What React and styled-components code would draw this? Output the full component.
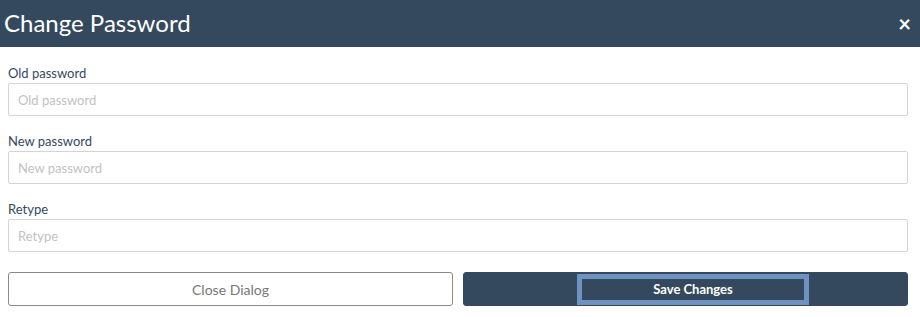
import React from "react";
import styled, { createGlobalStyle } from "styled-components";

const Global = createGlobalStyle`
  body {
    margin: 0;
    background: #fff;
    font-family: Lato, "Open Sans", sans-serif;
  }
`;

const App = () => {
  const fields = ["Old password", "New password", "Retype"];
  return (
    <>
      <Global />
      <Dialog>
        <Header>
          <Title>Change Password</Title>
          <CloseX>×</CloseX>
        </Header>
        <Body>
          {fields.map((f) => (
            <Field key={f}>
              <Label>{f}</Label>
              <Input type="password" placeholder={f} />
            </Field>
          ))}
          <Buttons>
            <Button>Close Dialog</Button>
            <Button primary>
              <Focus>Save Changes</Focus>
            </Button>
          </Buttons>
        </Body>
      </Dialog>
    </>
  );
};

const Dialog = styled.div`
  width: 920px;
`;
const Header = styled.div`
  height: 47px;
  background: #34495e;
  display: flex;
  align-items: center;
  justify-content: space-between;
  padding: 0 9px 0 4px;
  box-sizing: border-box;
`;
const Title = styled.div`
  color: #fff;
  font-size: 24px;
  line-height: 1;
  margin-top: -2px;
`;
const CloseX = styled.div`
  color: #fff;
  font-size: 22px;
  font-weight: bold;
  line-height: 1;
`;
const Body = styled.div`
  padding: 17px 12px 0 8px;
  display: flex;
  flex-direction: column;
`;
const Field = styled.div`
  display: flex;
  flex-direction: column;
  margin-bottom: 16px;
`;
const Label = styled.label`
  font-size: 13px;
  line-height: 19px;
  color: #34495e;
`;
const Input = styled.input`
  height: 33px;
  box-sizing: border-box;
  border: 1px solid #d4d4d4;
  border-radius: 2px;
  padding: 0 9px;
  font-family: Lato, sans-serif;
  font-size: 13px;
  outline: none;
  &::placeholder {
    color: #c2c2c2;
  }
`;
const Buttons = styled.div`
  display: flex;
  gap: 10px;
  margin-top: 4px;
`;
const Button = styled.button`
  flex: 1;
  height: 34px;
  box-sizing: border-box;
  border-radius: 3px;
  font-family: Lato, sans-serif;
  font-size: 14px;
  display: flex;
  align-items: center;
  justify-content: center;
  padding: 0;
  border: 1px solid ${(p) => (p.primary ? "#34495e" : "#8a8a8a")};
  background: ${(p) => (p.primary ? "#34495e" : "#fff")};
  color: ${(p) => (p.primary ? "#fff" : "#777")};
  font-weight: ${(p) => (p.primary ? "bold" : "normal")};
`;
const Focus = styled.span`
  width: 232px;
  height: 31px;
  margin-left: 15px;
  box-sizing: border-box;
  border: 5px solid #7092c2;
  display: flex;
  align-items: center;
  justify-content: center;
  font-size: 13px;
`;

export default App;
